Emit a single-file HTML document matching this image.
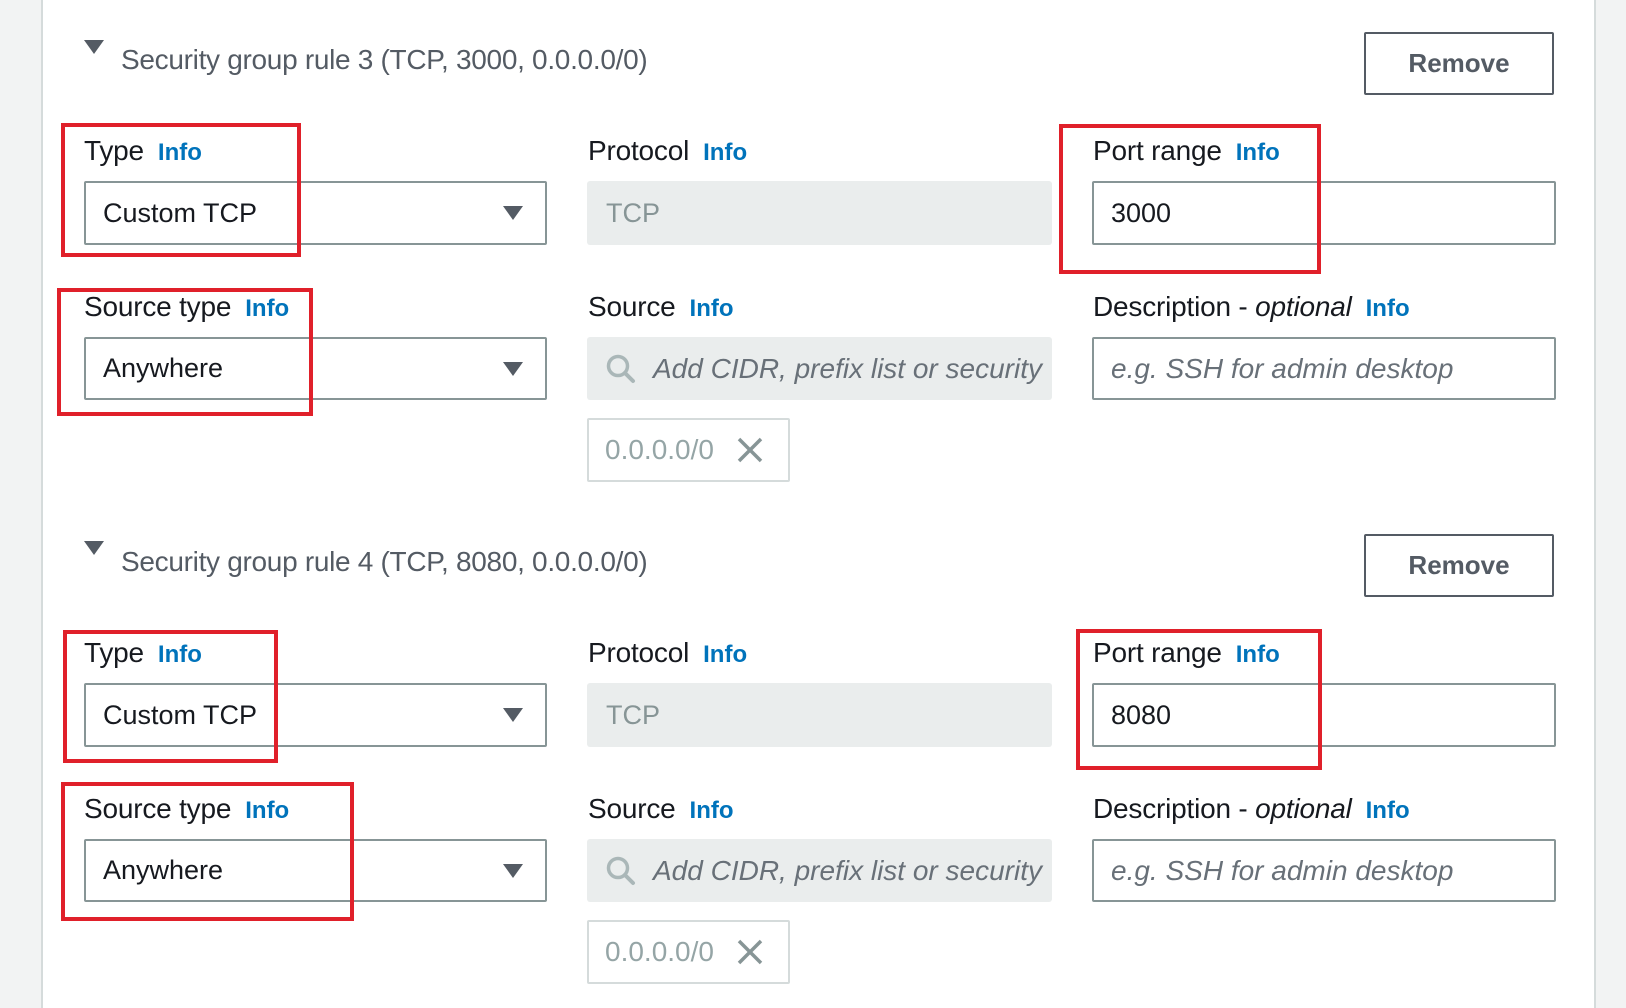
<!DOCTYPE html>
<html><head><style>
*{box-sizing:border-box;margin:0;padding:0}
body{width:1626px;height:998px;background:#f2f3f3;position:relative;overflow:hidden;font-family:"Liberation Sans",sans-serif;color:#16191f}
.panel{position:absolute;left:41px;top:-2px;width:1555px;height:1010px;background:#fff;border-left:2px solid #d5dbdb;border-right:2px solid #d5dbdb}
.a{position:absolute}
.tri{width:0;height:0;border-left:10px solid transparent;border-right:10px solid transparent;border-top:14px solid #545b64}
.h{font-size:28px;color:#545b64;letter-spacing:-0.3px}
.btn{border:2px solid #545b64;border-radius:2px;font-weight:bold;font-size:26px;color:#545b64;display:flex;align-items:center;justify-content:center}
.lbl{font-size:28px;color:#16191f;line-height:30px;letter-spacing:-0.2px}
.lbl b{color:#0073bb;font-size:24px;margin-left:14px;letter-spacing:0}
.lbl i{font-style:italic}
.inp{border:2px solid #879596;border-radius:2px;background:#fff;font-size:27px;display:flex;align-items:center;padding-left:17px}
.dis{background:#eaeded;border-radius:3px;font-size:27px;color:#879596;display:flex;align-items:center;padding-left:19px}
.ph{font-style:italic;color:#687078;font-size:28px}
.dd{position:absolute;right:22px;top:23px;width:0;height:0;border-left:10px solid transparent;border-right:10px solid transparent;border-top:14px solid #545b64}
.tag{border:2px solid #d5dbdb;border-radius:2px;font-size:28px;color:#95a5a6;display:flex;align-items:center;padding-left:16px}
.red{border:4px solid #e0202a}
</style></head><body>
<div class="panel"></div>

<!-- Rule 3 -->
<div class="a tri" style="left:84px;top:40px"></div>
<div class="a h" style="left:121px;top:44px">Security group rule 3 (TCP, 3000, 0.0.0.0/0)</div>
<div class="a btn" style="left:1364px;top:32px;width:190px;height:63px">Remove</div>

<div class="a lbl" style="left:84px;top:136px">Type<b>Info</b></div>
<div class="a lbl" style="left:588px;top:136px">Protocol<b>Info</b></div>
<div class="a lbl" style="left:1093px;top:136px">Port range<b>Info</b></div>
<div class="a inp" style="left:84px;top:181px;width:463px;height:64px">Custom TCP<div class="dd"></div></div>
<div class="a dis" style="left:587px;top:181px;width:465px;height:64px">TCP</div>
<div class="a inp" style="left:1092px;top:181px;width:464px;height:64px">3000</div>

<div class="a lbl" style="left:84px;top:292px">Source type<b>Info</b></div>
<div class="a lbl" style="left:588px;top:292px">Source<b>Info</b></div>
<div class="a lbl" style="left:1093px;top:292px">Description - <i>optional</i><b>Info</b></div>
<div class="a inp" style="left:84px;top:337px;width:463px;height:63px">Anywhere<div class="dd"></div></div>
<div class="a dis" style="left:587px;top:337px;width:465px;height:63px;padding-left:18px"><svg width="32" height="32" viewBox="0 0 32 32" style="margin-right:16px"><circle cx="13" cy="13" r="9.5" fill="none" stroke="#aab7b8" stroke-width="3.5"/><path d="M20 20l8 8" stroke="#aab7b8" stroke-width="4" stroke-linecap="round"/></svg><span class="ph">Add CIDR, prefix list or security</span></div>
<div class="a inp" style="left:1092px;top:337px;width:464px;height:63px"><span class="ph">e.g. SSH for admin desktop</span></div>
<div class="a tag" style="left:587px;top:418px;width:203px;height:64px">0.0.0.0/0<svg width="28" height="28" viewBox="0 0 28 28" style="margin-left:22px"><path d="M3 3L25 25M25 3L3 25" stroke="#879596" stroke-width="3.5"/></svg></div>

<div class="a red" style="left:61px;top:123px;width:240px;height:134px"></div>
<div class="a red" style="left:1059px;top:124px;width:262px;height:150px"></div>
<div class="a red" style="left:57px;top:288px;width:256px;height:128px"></div>

<!-- Rule 4 -->
<div class="a tri" style="left:84px;top:541px"></div>
<div class="a h" style="left:121px;top:546px">Security group rule 4 (TCP, 8080, 0.0.0.0/0)</div>
<div class="a btn" style="left:1364px;top:534px;width:190px;height:63px">Remove</div>

<div class="a lbl" style="left:84px;top:638px">Type<b>Info</b></div>
<div class="a lbl" style="left:588px;top:638px">Protocol<b>Info</b></div>
<div class="a lbl" style="left:1093px;top:638px">Port range<b>Info</b></div>
<div class="a inp" style="left:84px;top:683px;width:463px;height:64px">Custom TCP<div class="dd"></div></div>
<div class="a dis" style="left:587px;top:683px;width:465px;height:64px">TCP</div>
<div class="a inp" style="left:1092px;top:683px;width:464px;height:64px">8080</div>

<div class="a lbl" style="left:84px;top:794px">Source type<b>Info</b></div>
<div class="a lbl" style="left:588px;top:794px">Source<b>Info</b></div>
<div class="a lbl" style="left:1093px;top:794px">Description - <i>optional</i><b>Info</b></div>
<div class="a inp" style="left:84px;top:839px;width:463px;height:63px">Anywhere<div class="dd"></div></div>
<div class="a dis" style="left:587px;top:839px;width:465px;height:63px;padding-left:18px"><svg width="32" height="32" viewBox="0 0 32 32" style="margin-right:16px"><circle cx="13" cy="13" r="9.5" fill="none" stroke="#aab7b8" stroke-width="3.5"/><path d="M20 20l8 8" stroke="#aab7b8" stroke-width="4" stroke-linecap="round"/></svg><span class="ph">Add CIDR, prefix list or security</span></div>
<div class="a inp" style="left:1092px;top:839px;width:464px;height:63px"><span class="ph">e.g. SSH for admin desktop</span></div>
<div class="a tag" style="left:587px;top:920px;width:203px;height:64px">0.0.0.0/0<svg width="28" height="28" viewBox="0 0 28 28" style="margin-left:22px"><path d="M3 3L25 25M25 3L3 25" stroke="#879596" stroke-width="3.5"/></svg></div>

<div class="a red" style="left:63px;top:630px;width:215px;height:133px"></div>
<div class="a red" style="left:1076px;top:629px;width:246px;height:141px"></div>
<div class="a red" style="left:61px;top:782px;width:293px;height:139px"></div>
</body></html>
